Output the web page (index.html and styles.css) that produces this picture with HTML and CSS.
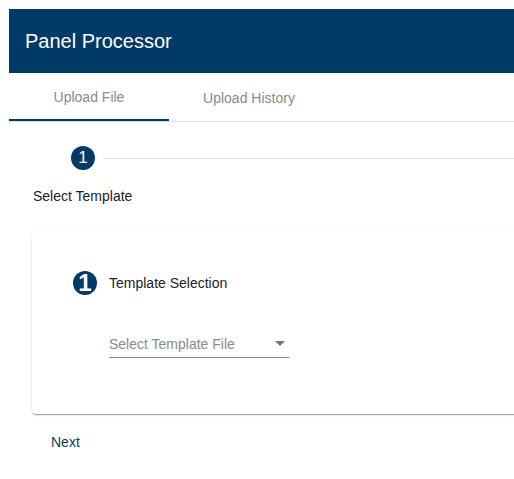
FILE: index.html
```html
<!DOCTYPE html>
<html>
<head>
<meta charset="utf-8">
<link rel="stylesheet" href="styles.css">
</head>
<body>
<div class="app">
  <header class="toolbar">Panel Processor</header>
  <nav class="tabs">
    <div class="tab active">Upload File</div>
    <div class="tab">Upload History</div>
  </nav>
  <section class="stepper">
    <div class="step-head">
      <span class="badge">1</span>
      <span class="step-line"></span>
    </div>
    <div class="step-label">Select Template</div>
    <div class="card">
      <div class="card-step">
        <span class="badge big">1</span>
        <span class="card-label">Template Selection</span>
      </div>
      <div class="select">
        <span class="select-text">Select Template File</span>
        <span class="arrow"></span>
      </div>
    </div>
    <div class="next">Next</div>
  </section>
</div>
</body>
</html>
```

FILE: styles.css
```css
html { overflow: hidden; }
body {
  margin: 9px 0 0 9px;
  font-family: "Liberation Sans", Arial, sans-serif;
  background: #fff;
}
.app { width: 600px; }
.toolbar {
  height: 64px;
  background: #003a66;
  color: #fff;
  font-size: 20px;
  display: flex;
  align-items: center;
  padding-left: 16px;
}
.tabs {
  display: flex;
  height: 48px;
  border-bottom: 1px solid #e0e0e0;
}
.tab {
  width: 160px;
  display: flex;
  align-items: center;
  justify-content: center;
  font-size: 14px;
  color: #8a8a8a;
  box-sizing: border-box;
  padding-top: 1px;
}
.tab.active { border-bottom: 2px solid #003a66; padding-top: 2px; }
.stepper { padding-top: 24px; }
.step-head {
  display: flex;
  align-items: center;
  padding-left: 62px;
}
.badge {
  width: 24px;
  height: 24px;
  border-radius: 50%;
  background: #003a66;
  color: #fff;
  font-size: 17px;
  line-height: 24px;
  display: flex;
  align-items: center;
  justify-content: center;
  flex: none;
}
.badge.big { font-size: 24px; font-weight: bold; }
.step-line {
  flex: 1;
  height: 1px;
  background: #e0e0e0;
  margin-left: 8px;
}
.step-label {
  margin-top: 18px;
  padding-left: 24px;
  font-size: 14px;
  line-height: 16px;
  color: #222;
}
.card {
  margin: 27px 0 0 23px;
  height: 183px;
  box-sizing: border-box;
  border-radius: 4px;
  box-shadow: 0 2px 1px -1px rgba(0,0,0,.2), 0 1px 1px 0 rgba(0,0,0,.14), 0 1px 3px 0 rgba(0,0,0,.12);
  padding: 40px 0 0 41px;
}
.card-step {
  display: flex;
  align-items: center;
}
.card-label {
  margin-left: 12px;
  font-size: 14px;
  color: #222;
}
.select {
  margin: 35px 0 0 36px;
  width: 180px;
  height: 28px;
  box-sizing: border-box;
  border-bottom: 1px solid #8c8c8c;
  display: flex;
  align-items: center;
  justify-content: space-between;
}
.select-text { font-size: 14px; color: #8a8a8a; }
.arrow {
  width: 0; height: 0;
  border-left: 5px solid transparent;
  border-right: 5px solid transparent;
  border-top: 5px solid #757575;
  margin-right: 4px;
}
.next {
  margin: 20px 0 0 42px;
  font-size: 14px;
  line-height: 16px;
  color: #0d3b5e;
}
```
